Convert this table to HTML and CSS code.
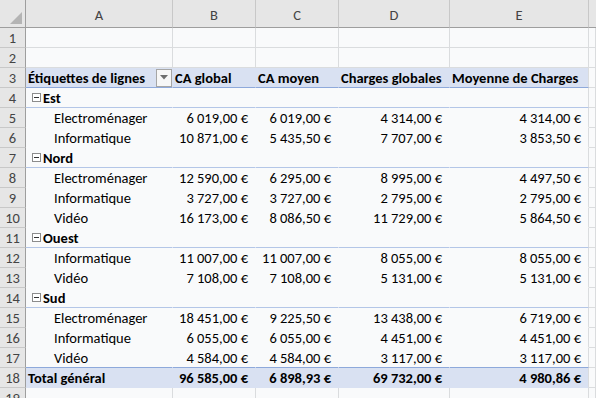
FILE: index.html
```html
<!DOCTYPE html>
<html lang="fr">
<head>
<meta charset="utf-8">
<title>Tableau croisé dynamique</title>
<link rel="stylesheet" href="styles.css">
</head>
<body>
<div class="sheet">
  <div class="corner"><span class="tri"></span></div>
  <div class="colhead">A</div>
  <div class="colhead">B</div>
  <div class="colhead">C</div>
  <div class="colhead">D</div>
  <div class="colhead">E</div>
  <div class="colhead last"></div>

  <div class="rowhead">1</div><div class="c"></div><div class="c"></div><div class="c"></div><div class="c"></div><div class="c"></div><div class="c"></div>
  <div class="rowhead">2</div><div class="c"></div><div class="c"></div><div class="c"></div><div class="c"></div><div class="c"></div><div class="c"></div>

  <div class="rowhead">3</div>
  <div class="c ph in phf"><span>Étiquettes de lignes</span><span class="filter"><svg width="8" height="5" viewBox="0 0 8 5"><path d="M0 0h8L4 4.5z" fill="#6e6e6e"/></svg></span></div>
  <div class="c ph in">CA global</div>
  <div class="c ph in">CA moyen</div>
  <div class="c ph in">Charges globales</div>
  <div class="c ph">Moyenne de Charges</div>
  <div class="c"></div>

  <div class="rowhead">4</div>
  <div class="c pg in"><span class="tog"></span>Est</div><div class="c pg in"></div><div class="c pg in"></div><div class="c pg in"></div><div class="c pg"></div><div class="c"></div>
  <div class="rowhead">5</div>
  <div class="c pi in item">Electroménager</div><div class="c pi in num">6 019,00 €</div><div class="c pi in num">6 019,00 €</div><div class="c pi in num">4 314,00 €</div><div class="c pi num">4 314,00 €</div><div class="c"></div>
  <div class="rowhead">6</div>
  <div class="c pi in item">Informatique</div><div class="c pi in num">10 871,00 €</div><div class="c pi in num">5 435,50 €</div><div class="c pi in num">7 707,00 €</div><div class="c pi num">3 853,50 €</div><div class="c"></div>

  <div class="rowhead">7</div>
  <div class="c pg in"><span class="tog"></span>Nord</div><div class="c pg in"></div><div class="c pg in"></div><div class="c pg in"></div><div class="c pg"></div><div class="c"></div>
  <div class="rowhead">8</div>
  <div class="c pi in item">Electroménager</div><div class="c pi in num">12 590,00 €</div><div class="c pi in num">6 295,00 €</div><div class="c pi in num">8 995,00 €</div><div class="c pi num">4 497,50 €</div><div class="c"></div>
  <div class="rowhead">9</div>
  <div class="c pi in item">Informatique</div><div class="c pi in num">3 727,00 €</div><div class="c pi in num">3 727,00 €</div><div class="c pi in num">2 795,00 €</div><div class="c pi num">2 795,00 €</div><div class="c"></div>
  <div class="rowhead">10</div>
  <div class="c pi in item">Vidéo</div><div class="c pi in num">16 173,00 €</div><div class="c pi in num">8 086,50 €</div><div class="c pi in num">11 729,00 €</div><div class="c pi num">5 864,50 €</div><div class="c"></div>

  <div class="rowhead">11</div>
  <div class="c pg in"><span class="tog"></span>Ouest</div><div class="c pg in"></div><div class="c pg in"></div><div class="c pg in"></div><div class="c pg"></div><div class="c"></div>
  <div class="rowhead">12</div>
  <div class="c pi in item">Informatique</div><div class="c pi in num">11 007,00 €</div><div class="c pi in num">11 007,00 €</div><div class="c pi in num">8 055,00 €</div><div class="c pi num">8 055,00 €</div><div class="c"></div>
  <div class="rowhead">13</div>
  <div class="c pi in item">Vidéo</div><div class="c pi in num">7 108,00 €</div><div class="c pi in num">7 108,00 €</div><div class="c pi in num">5 131,00 €</div><div class="c pi num">5 131,00 €</div><div class="c"></div>

  <div class="rowhead">14</div>
  <div class="c pg in"><span class="tog"></span>Sud</div><div class="c pg in"></div><div class="c pg in"></div><div class="c pg in"></div><div class="c pg"></div><div class="c"></div>
  <div class="rowhead">15</div>
  <div class="c pi in item">Electroménager</div><div class="c pi in num">18 451,00 €</div><div class="c pi in num">9 225,50 €</div><div class="c pi in num">13 438,00 €</div><div class="c pi num">6 719,00 €</div><div class="c"></div>
  <div class="rowhead">16</div>
  <div class="c pi in item">Informatique</div><div class="c pi in num">6 055,00 €</div><div class="c pi in num">6 055,00 €</div><div class="c pi in num">4 451,00 €</div><div class="c pi num">4 451,00 €</div><div class="c"></div>
  <div class="rowhead">17</div>
  <div class="c pi pl in item">Vidéo</div><div class="c pi pl in num">4 584,00 €</div><div class="c pi pl in num">4 584,00 €</div><div class="c pi pl in num">3 117,00 €</div><div class="c pi pl num">3 117,00 €</div><div class="c"></div>

  <div class="rowhead">18</div>
  <div class="c pt in">Total général</div><div class="c pt in num">96 585,00 €</div><div class="c pt in num">6 898,93 €</div><div class="c pt in num">69 732,00 €</div><div class="c pt num">4 980,86 €</div><div class="c"></div>

  <div class="rowhead">19</div><div class="c"></div><div class="c"></div><div class="c"></div><div class="c"></div><div class="c"></div><div class="c"></div>
</div>
</body>
</html>
```

FILE: styles.css
```css
html, body {
  margin: 0;
  padding: 0;
  background: #f9fafb;
  overflow: hidden;
}

body {
  font-family: "Carlito", Lato, "Liberation Sans", sans-serif;
  font-size: 14.5px;
  color: #000;
}

.sheet {
  display: grid;
  grid-template-columns: 26px 147px 83px 83px 111px 139px 1fr;
  grid-template-rows: 28px;
  grid-auto-rows: 20px;
  width: 596px;
  height: 398px;
  overflow: hidden;
}

.sheet > div {
  box-sizing: border-box;
  white-space: nowrap;
  overflow: hidden;
}

.corner {
  background: #e6e6e6;
  border-right: 1px solid #9e9e9e;
  border-bottom: 1px solid #9e9e9e;
  display: flex;
  align-items: flex-end;
  justify-content: flex-end;
  padding: 0 3px 3px 0;
}

.tri {
  width: 0;
  height: 0;
  border-left: 12px solid transparent;
  border-bottom: 12px solid #b4b4b4;
}

.colhead {
  background: #e6e6e6;
  border-right: 1px solid #c8c8c8;
  border-bottom: 1px solid #9e9e9e;
  color: #444;
  display: flex;
  align-items: flex-end;
  justify-content: center;
  padding-bottom: 3px;
}

.colhead.last {
  border-right: none;
}

.rowhead {
  background: #e6e6e6;
  border-right: 1px solid #9e9e9e;
  border-bottom: 1px solid #c8c8c8;
  color: #444;
  text-align: center;
  line-height: 20px;
}

.c {
  border-right: 1px solid #dadcde;
  border-bottom: 1px solid #dadcde;
  line-height: 20px;
  padding: 0 2px;
}

/* pivot header */
.ph {
  background: #d9e1f2;
  border-bottom-color: #8ea9db;
  font-weight: bold;
}
.ph.in {
  border-right-color: #d9e1f2;
}

.phf {
  display: flex;
  align-items: center;
  justify-content: space-between;
  padding-right: 0;
}

.filter {
  width: 16px;
  height: 18px;
  box-sizing: border-box;
  border: 1px solid #a6a6a6;
  background: #f7f7f7;
  display: flex;
  align-items: center;
  justify-content: center;
}

/* group row */
.pg {
  font-weight: bold;
  border-bottom-color: #b4c6e7;
  display: flex;
  align-items: center;
  padding-left: 6px;
}
.pg.in {
  border-right-color: #f9fafb;
}

.tog {
  width: 9px;
  height: 9px;
  box-sizing: border-box;
  border: 1px solid #8c8c8c;
  background: #fff;
  margin-right: 2px;
  position: relative;
  flex: none;
}
.tog::after {
  content: "";
  position: absolute;
  left: 1px;
  right: 1px;
  top: 3px;
  height: 1px;
  background: #333;
}

/* item rows */
.pi {
  border-bottom-color: #f9fafb;
}
.pi.in {
  border-right-color: #f9fafb;
}
.pi.pl {
  border-bottom-color: #8ea9db;
}

.item {
  padding-left: 28px;
}

.num {
  text-align: right;
  padding-right: 7px;
}

/* total row */
.pt {
  background: #d9e1f2;
  font-weight: bold;
  border-bottom-color: #d9e1f2;
}
.pt.in {
  border-right-color: #d9e1f2;
}
```
